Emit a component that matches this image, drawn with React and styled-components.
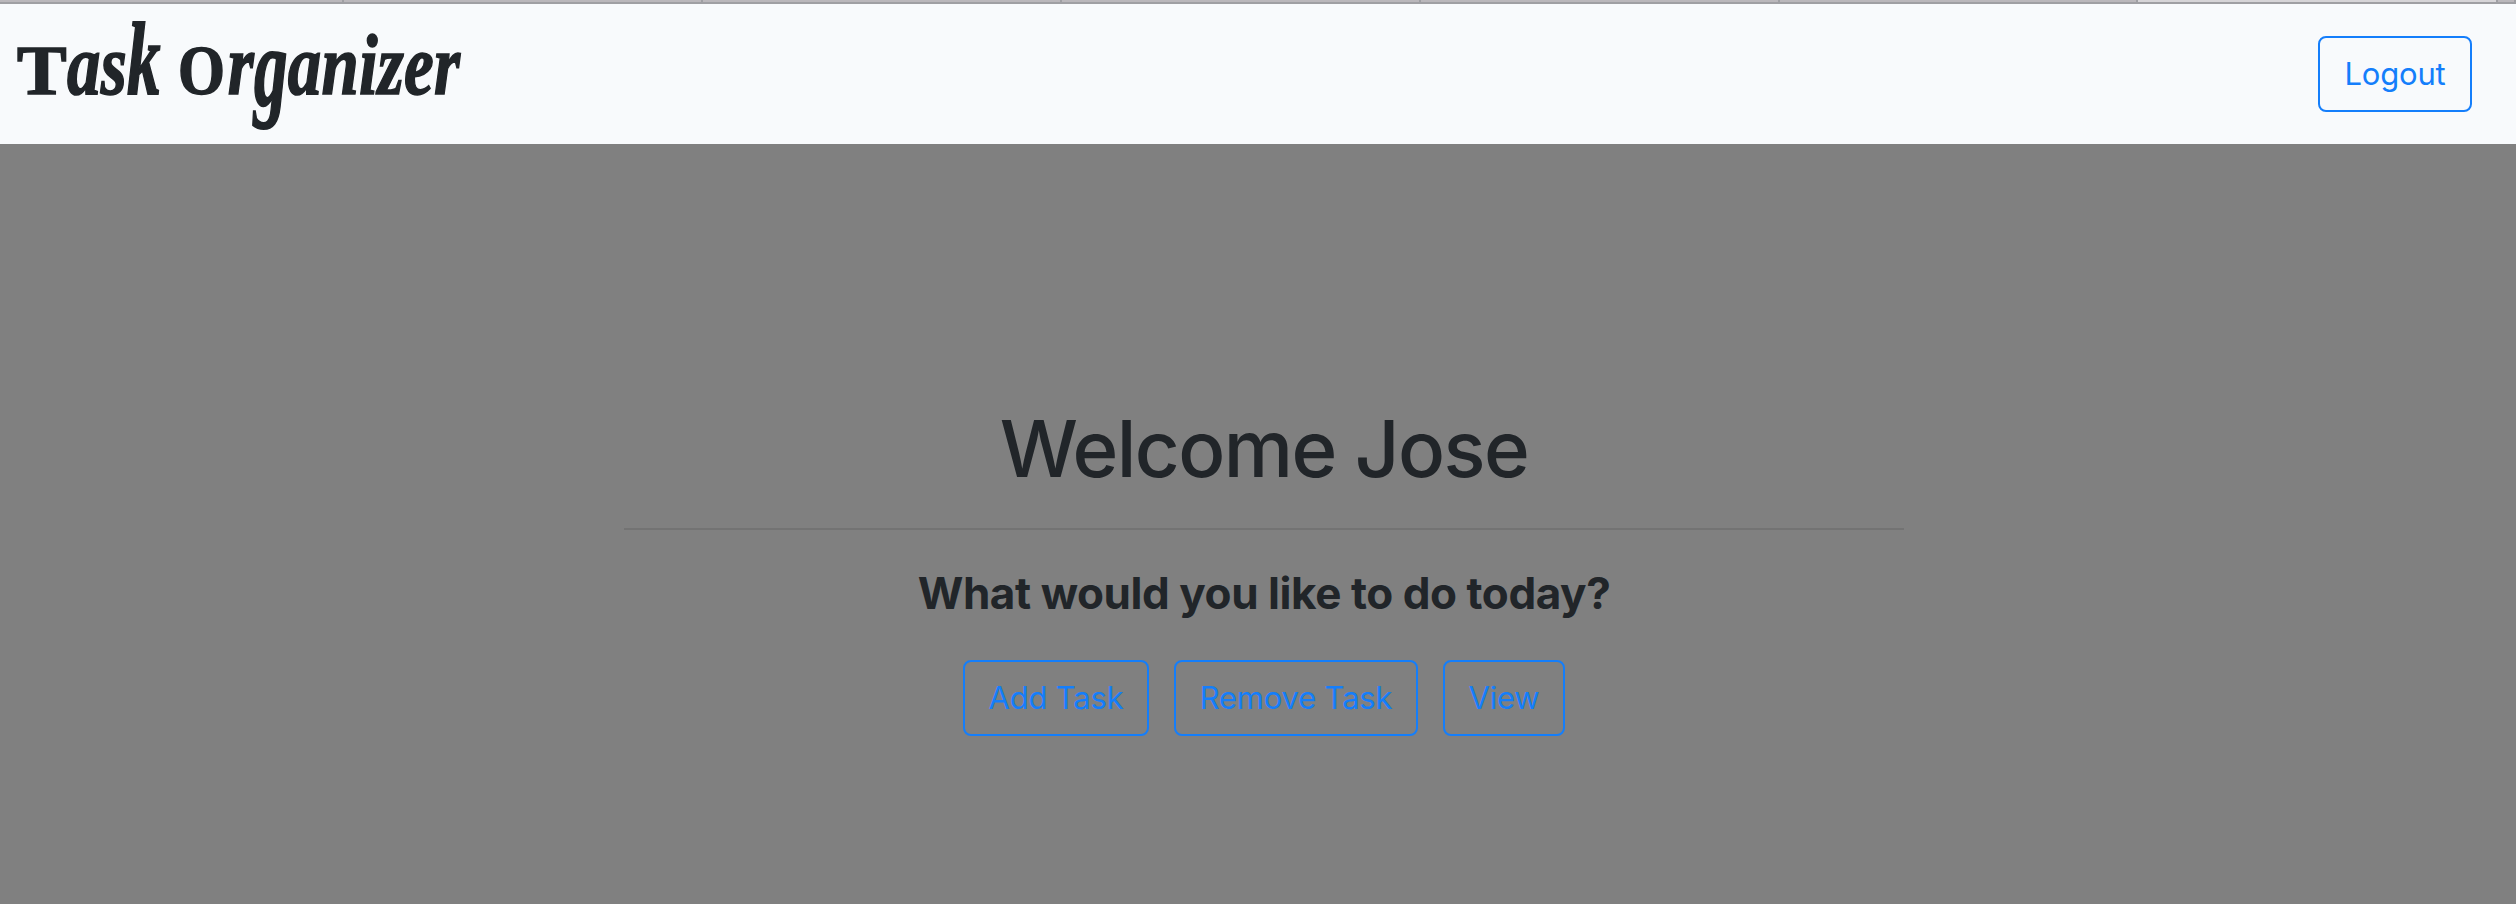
import React from "react";
import styled, { createGlobalStyle } from "styled-components";

const GlobalStyle = createGlobalStyle`
  * { box-sizing: border-box; }
  body {
    margin: 0;
    background: #808080;
    color: #212529;
    font-family: Inter, "Liberation Sans", sans-serif;
  }
`;

const Page = styled.div`
  display: flex;
  flex-direction: column;
  height: 904px;
  overflow: hidden;
`;

const TabStrip = styled.div`
  display: flex;
  flex: none;
  height: 4px;
  border-bottom: 2px solid #9f9fa3;
`;

const Tab = styled.div`
  flex: none;
  width: ${(p) => p.$width}px;
  background: ${(p) => (p.$active ? "#d6d4d7" : "#bab7bb")};
  border-right: 2px solid #9f9fa3;
`;

const Navbar = styled.header`
  display: flex;
  flex: none;
  align-items: center;
  justify-content: space-between;
  height: 140px;
  padding: 0 44px 0 17px;
  background: #f8fafc;
`;

const Brand = styled.div`
  padding-bottom: 12px;
  font: italic bold 87px/110px "Liberation Serif", serif;
  letter-spacing: 0.3px;
  white-space: nowrap;
  -webkit-text-stroke: 1.6px #212529;
  transform: scaleX(0.77);
  transform-origin: left center;
`;

const Capital = styled.span`
  display: inline-block;
  font-style: normal;
  font-size: 70px;
  transform: scaleX(${(p) => p.$stretch || 1});
  transform-origin: left center;
  margin-right: ${(p) => p.$after || 0}px;
`;

/* Lengthens an ascender from the baseline or a descender from the x-height. */
const Tall = styled.span`
  display: inline-block;
  line-height: 70px;
  transform: scaleY(${(p) => p.$stretch});
  transform-origin: left ${(p) => p.$origin}px;
`;

const Button = styled.button`
  flex: none;
  width: ${(p) => p.$width}px;
  height: 76px;
  padding: 0;
  border: 2px solid #147efb;
  border-radius: 8px;
  background: transparent;
  color: #147efb;
  font: 400 31px/48px Inter, sans-serif;
  letter-spacing: -0.2px;
  white-space: nowrap;
`;

const Main = styled.main`
  display: flex;
  flex-direction: column;
  align-items: center;
  width: 1280px;
  margin-left: 624px;
  padding-top: 257px;
`;

const Heading = styled.h1`
  margin: 0;
  font-size: 78px;
  font-weight: 550;
  line-height: 96px;
  letter-spacing: -1.6px;
  white-space: nowrap;
`;

const Divider = styled.hr`
  width: 100%;
  height: 2px;
  margin: 31px 0 31px;
  border: 0;
  background: rgba(0, 0, 0, 0.1);
`;

const Question = styled.h3`
  margin: 0;
  font-size: 44px;
  font-weight: 700;
  line-height: 64px;
  letter-spacing: -0.43px;
  white-space: nowrap;
`;

const Actions = styled.div`
  display: flex;
  gap: 25px;
  margin-top: 35px;
`;

const tabs = [344, 359, 359, 359, 359, 358, 360, 18];

export default function App() {
  return (
    <Page>
      <GlobalStyle />
      <TabStrip>
        {tabs.map((width, i) => (
          <Tab key={i} $width={width} $active={i === 6} />
        ))}
      </TabStrip>
      <Navbar>
        <Brand>
          <Capital $stretch={1.38} $after={18}>T</Capital>as<Tall $stretch={1.19} $origin={64}>k</Tall>{" "}
          <Capital $stretch={1.12} $after={10}>O</Capital>r<Tall $stretch={1.28} $origin={24}>g</Tall>anizer
        </Brand>
        <Button $width={154}>Logout</Button>
      </Navbar>
      <Main>
        <Heading>Welcome Jose</Heading>
        <Divider />
        <Question>What would you like to do today?</Question>
        <Actions>
          <Button $width={186}>Add Task</Button>
          <Button $width={244}>Remove Task</Button>
          <Button $width={122}>View</Button>
        </Actions>
      </Main>
    </Page>
  );
}
